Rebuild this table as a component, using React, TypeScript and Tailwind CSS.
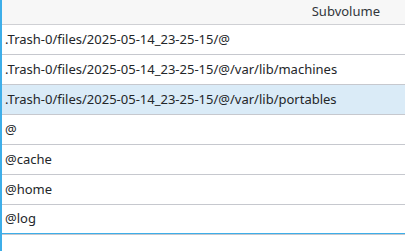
const rows = [
  '.Trash-0/files/2025-05-14_23-25-15/@',
  '.Trash-0/files/2025-05-14_23-25-15/@/var/lib/machines',
  '.Trash-0/files/2025-05-14_23-25-15/@/var/lib/portables',
  '@',
  '@cache',
  '@home',
  '@log',
];

const selectedIndex = 2;

export default function App() {
  return (
    <div
      className="h-[251px] w-[405px] overflow-hidden bg-white border-l-2 border-[#3daee9] text-[13px] text-[#232629]"
      style={{ fontFamily: '"Noto Sans", sans-serif' }}
    >
      <div className="flex h-[25px] items-center justify-end border-b border-[#cfd0d4] bg-[#f7f7f7] pr-[25px] text-[#31363b]">
        Subvolume
      </div>
      {rows.map((path, i) => (
        <div
          key={path}
          className={
            i === rows.length - 1
              ? 'flex h-[29px] items-center border-b border-[#3daee9] pl-[3px]'
              : i === selectedIndex
                ? 'flex h-[30px] items-center border-b border-[#c6c8ce] bg-[#daebf7] pl-[3px]'
                : 'flex h-[30px] items-center border-b border-[#c6c8ce] pl-[3px]'
          }
        >
          {path}
        </div>
      ))}
      <div className="h-px bg-[#c6c8ce]" />
    </div>
  );
}
